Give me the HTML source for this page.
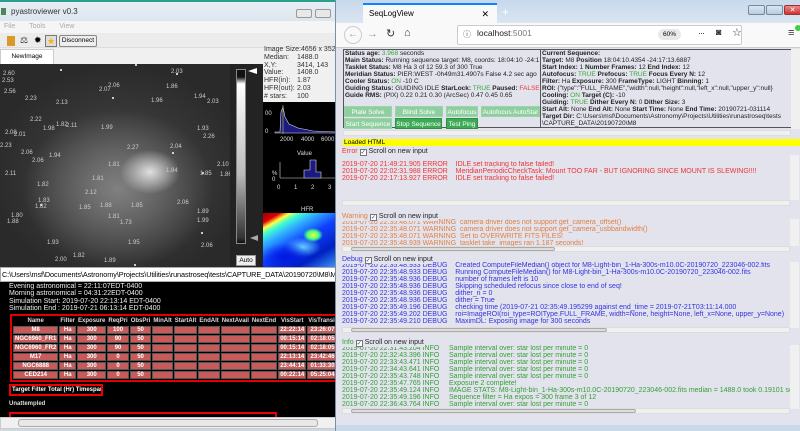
<!DOCTYPE html>
<html><head><meta charset="utf-8">
<style>
*{box-sizing:border-box;margin:0;padding:0}
body{width:800px;height:431px;overflow:hidden;position:relative;font-family:"Liberation Sans",sans-serif;background:#cfdce9}
.a{position:absolute}
.lw{left:0;top:0;width:336px;height:431px;background:#f0f0f0;border-top:2px solid #2aa08a;overflow:hidden}
.t7{font-size:7px;line-height:7px;white-space:nowrap}
.star{position:absolute;color:#ccc;font-size:6px;white-space:nowrap}
.dot{position:absolute;width:2px;height:2px;background:#fff;border-radius:1px}
table.tg{position:absolute;left:10px;top:312px;width:345px;border:2px solid #e00000;border-spacing:1px;background:#000;font-size:6px;font-weight:bold;color:#fff;border-collapse:separate;table-layout:auto}
table.tg td,table.tg th{height:8px;line-height:6px;padding:0 1px;text-align:center;white-space:nowrap;font-size:6px}
table.tg td{background:#c85a5a;border:1px solid #555}
table.tg th{color:#ddd}
.rw{left:335px;top:0;width:465px;height:431px;background:#e3e3ee;border-left:1px solid #7a8ea8}
.lbl{font-weight:bold}
.btn{position:absolute;height:11px;font-size:6.5px;line-height:11px;text-align:center;color:#fff;background:#8fcf9f;border:1px solid #9bd3aa;white-space:nowrap;overflow:hidden}
.btn.d{background:#3daa55;border-color:#2e8f46}
.log{position:absolute;left:342px;width:448px;font-size:7px;line-height:7px;white-space:nowrap;overflow:hidden}
.hs{position:absolute;left:342px;width:448px;height:6px;background:#f0f0f0;border:1px solid #ddd}
.hs i{position:absolute;top:0;height:4px;background:#ddd;border:1px solid #aaa;border-radius:2px}
.cb{display:inline-block;width:7px;height:7px;border:1px solid #777;background:#fff;vertical-align:-1px;font-size:6px;line-height:6px;color:#336;text-align:center;margin:0 2px}
.vs{position:absolute;left:790px;width:9px;background:#f0f0f0}
</style></head><body>

<!-- LEFT WINDOW -->
<div class="a lw">
  <div class="a" style="left:0;top:0;width:336px;height:19px;background:linear-gradient(#e8eef5,#dde6ef)"></div>
  <div class="a" style="left:1px;top:6px;width:5px;height:7px;background:#4a8a5a"></div>
  <div class="a" style="left:11px;top:5px;font-size:8px;color:#333">pyastroviewer v0.3</div>
  <div class="a" style="left:296px;top:7px;width:16px;height:9px;border:1px solid #999;border-radius:2px;background:#e8e8e8"></div>
  <div class="a" style="left:315px;top:7px;width:16px;height:9px;border:1px solid #999;border-radius:2px;background:#e8e8e8"></div>
  <div class="a" style="left:0;top:19px;width:336px;height:12px;background:#f5f5f5"></div>
  <div class="a" style="left:4px;top:21px;font-size:7px;color:#aaa;word-spacing:12px">File Tools View</div>
  <div class="a" style="left:0;top:31px;width:336px;height:15px;background:#ececec;border-bottom:1px solid #ddd"></div>
  <div class="a" style="left:7px;top:34px;width:8px;height:10px;background:#d99a2b"></div>
  <div class="a" style="left:20px;top:33px;font-size:9px;color:#333">⚖</div>
  <div class="a" style="left:34px;top:33px;font-size:9px;color:#000">✹</div>
  <div class="a" style="left:45px;top:33px;width:12px;height:12px;border:1px solid #777;background:#ddd;font-size:9px;color:#f0b800;text-align:center;line-height:11px">★</div>
  <div class="a" style="left:59px;top:33px;width:38px;height:12px;border:1px solid #888;border-radius:2px;background:#eee;font-size:6.5px;line-height:10px;text-align:center">Disconnect</div>
  <div class="a" style="left:0;top:47px;width:54px;height:15px;background:#fff;border:1px solid #ccc;border-bottom:none;font-size:6.5px;line-height:14px;text-align:center">NewImage</div>

  <!-- image -->
  <div class="a" style="left:0;top:62px;width:230px;height:203px;overflow:hidden;background:radial-gradient(ellipse 30px 22px at 150px 108px,#e0e0e0,rgba(200,200,200,0) 100%),radial-gradient(ellipse 95px 80px at 118px 125px,#808080,rgba(100,100,100,0) 100%),radial-gradient(ellipse 130px 110px at 120px 110px,#484848,#2a2a2a 100%)">
    <div class="dot" style="left:60px;top:5px"></div><div class="dot" style="left:135px;top:0px"></div><div class="dot" style="left:176px;top:9px"></div><div class="dot" style="left:112px;top:33px"></div><div class="dot" style="left:172px;top:88px"></div><div class="dot" style="left:40px;top:140px"></div><div class="dot" style="left:202px;top:108px"></div><div class="dot" style="left:134px;top:200px"></div><div class="dot" style="left:201px;top:168px"></div>
    <span class="star" style="left:3px;top:7px">2.60</span><span class="star" style="left:2px;top:14px">2.53</span><span class="star" style="left:4px;top:25px">2.56</span><span class="star" style="left:25px;top:32px">2.23</span><span class="star" style="left:56px;top:36px">2.13</span><span class="star" style="left:99px;top:23px">2.07</span><span class="star" style="left:108px;top:19px">2.06</span><span class="star" style="left:171px;top:5px">2.03</span><span class="star" style="left:166px;top:20px">1.86</span><span class="star" style="left:151px;top:34px">1.96</span><span class="star" style="left:194px;top:30px">1.94</span><span class="star" style="left:207px;top:35px">2.03</span>
    <span class="star" style="left:30px;top:53px">2.22</span><span class="star" style="left:43px;top:62px">1.98</span><span class="star" style="left:56px;top:58px">1.82</span><span class="star" style="left:66px;top:59px">2.11</span><span class="star" style="left:5px;top:66px">2.08</span><span class="star" style="left:14px;top:68px">2.01</span><span class="star" style="left:0px;top:79px">2.23</span><span class="star" style="left:101px;top:61px">1.99</span><span class="star" style="left:197px;top:62px">1.93</span><span class="star" style="left:203px;top:70px">2.26</span>
    <span class="star" style="left:21px;top:86px">2.06</span><span class="star" style="left:32px;top:94px">2.06</span><span class="star" style="left:49px;top:89px">1.94</span><span class="star" style="left:127px;top:81px">2.27</span><span class="star" style="left:170px;top:80px">2.04</span><span class="star" style="left:108px;top:98px">1.81</span><span class="star" style="left:166px;top:104px">1.84</span><span class="star" style="left:5px;top:107px">2.11</span><span class="star" style="left:217px;top:98px">2.10</span><span class="star" style="left:200px;top:107px">1.85</span><span class="star" style="left:220px;top:108px">1.86</span>
    <span class="star" style="left:37px;top:118px">1.82</span><span class="star" style="left:85px;top:126px">2.12</span><span class="star" style="left:92px;top:112px">1.81</span><span class="star" style="left:38px;top:134px">1.83</span><span class="star" style="left:35px;top:140px">1.82</span><span class="star" style="left:79px;top:141px">1.85</span><span class="star" style="left:100px;top:139px">1.88</span><span class="star" style="left:131px;top:139px">1.85</span><span class="star" style="left:177px;top:136px">2.06</span><span class="star" style="left:108px;top:150px">1.81</span><span class="star" style="left:120px;top:156px">1.73</span><span class="star" style="left:197px;top:145px">1.89</span><span class="star" style="left:197px;top:154px">1.99</span><span class="star" style="left:11px;top:149px">1.80</span><span class="star" style="left:7px;top:155px">1.88</span>
    <span class="star" style="left:47px;top:176px">1.93</span><span class="star" style="left:128px;top:176px">1.95</span><span class="star" style="left:201px;top:179px">2.06</span><span class="star" style="left:73px;top:189px">1.82</span><span class="star" style="left:55px;top:193px">2.00</span><span class="star" style="left:104px;top:194px">1.89</span>
  </div>
  <!-- slider panel -->
  <div class="a" style="left:230px;top:62px;width:33px;height:203px;background:#232323"></div>
  <div class="a" style="left:236px;top:67px;width:10px;height:175px;border:1px solid #888;background:linear-gradient(#111 0 4%,#fff 8%,#bbb 60%,#333 97%,#111)"></div>
  <div class="a" style="left:248px;top:66px;width:0;height:0;border-top:3px solid transparent;border-bottom:3px solid transparent;border-right:9px solid #fff"></div>
  <div class="a" style="left:250px;top:233px;width:0;height:0;border-top:3px solid transparent;border-bottom:3px solid transparent;border-right:8px solid #aaa"></div>
  <div class="a" style="left:236px;top:253px;width:20px;height:11px;background:#eee;border:1px solid #999;font-size:6.5px;line-height:9px;text-align:center">Auto</div>
  <!-- info panel -->
  <div class="a t7" style="left:264px;top:44px;color:#333;line-height:7.8px">Image Size:4656 x 3520<br>Median:<br>X,Y:<br>Value:<br>HFR(in):<br>HFR(out):<br># stars:</div>
  <div class="a t7" style="left:297px;top:44px;color:#333;line-height:7.8px"><br>1488.0<br>3414, 143<br>1408.0<br>1.87<br>2.03<br>100</div>
  <div class="a" style="left:263px;top:100px;width:73px;height:111px;background:#000"></div>
  <svg class="a" style="left:263px;top:100px" width="73" height="111">
    <path d="M12 30 L17 30 L18 10 L20 5 L22 15 L26 22 L35 26 L50 29 L73 30 L73 31 L12 31Z" fill="#1a1a80" stroke="#ddd" stroke-width="0.6"/>
    <line x1="20" y1="3" x2="20" y2="32" stroke="#cc4" stroke-width="0.6"/>
    <text x="2" y="13" font-size="6" fill="#ddd">00</text><text x="2" y="31" font-size="6" fill="#ddd">0</text>
    <text x="17" y="39" font-size="6" fill="#ddd">2000</text><text x="38" y="39" font-size="6" fill="#ddd">4000</text><text x="58" y="39" font-size="6" fill="#ddd">6000</text>
    <text x="34" y="53" font-size="6" fill="#ddd">Value</text>
    <path d="M17 76 L17 60 M17 76 L73 76" stroke="#ddd" stroke-width="0.6" fill="none"/>
    <path d="M41 76 L41 68 L47 68 L47 58 L53 58 L53 70 L58 70 L58 76Z" fill="#1a1a80" stroke="#ddd" stroke-width="0.6"/>
    <text x="9" y="73" font-size="6" fill="#ddd">%</text><text x="9" y="79" font-size="6" fill="#ddd">0</text>
    <text x="14" y="87" font-size="6" fill="#ddd">0</text><text x="31" y="87" font-size="6" fill="#ddd">1</text><text x="48" y="87" font-size="6" fill="#ddd">2</text><text x="65" y="87" font-size="6" fill="#ddd">3</text>
    <text x="38" y="109" font-size="6" fill="#ddd">HFR</text>
  </svg>
  <div class="a" style="left:263px;top:211px;width:73px;height:56px;overflow:hidden;background:radial-gradient(ellipse 25px 14px at 22px 44px,#0018e0,rgba(0,0,255,0)),radial-gradient(ellipse 10px 7px at 50px 22px,#ffff40,#40ff80 60%,rgba(0,255,255,0)),radial-gradient(ellipse 18px 10px at 40px 34px,#60d0ff,rgba(0,255,255,0)),linear-gradient(150deg,#900 0,#d00 10%,#ff4 16%,#40ffd0 22%,#30b0ff 32%,#1040ff 50%,#0020c0 75%,#40a0ff 100%)"></div>
  <!-- path bar -->
  <div class="a" style="left:0;top:265px;width:336px;height:15px;background:#fff;border:1px solid #aaa;font-size:7.3px;line-height:13px;white-space:nowrap;overflow:hidden;padding-left:1px;letter-spacing:-0.1px">C:\Users\msf\Documents\Astronomy\Projects\Utilities\runastroseq\tests\CAPTURE_DATA\20190720\M8\M</div>
  <!-- black area -->
  <div class="a" style="left:0;top:280px;width:336px;height:135px;background:#000"></div>
  <div class="a t7" style="left:9px;top:281px;color:#eee;line-height:7.3px">Evening astronomical = 22:11:07EDT-0400<br>Morning astronomical = 04:31:22EDT-0400<br>Simulation Start: 2019-07-20 22:13:14 EDT-0400<br>Simulation End : 2019-07-21 06:13:14 EDT-0400</div>
  <table class="tg">
    <tr><th style="width:42px">Name</th><th>Filter</th><th>Exposure</th><th>ReqPri</th><th>ObsPri</th><th>MinAlt</th><th>StartAlt</th><th>EndAlt</th><th>NextAvail</th><th>NextEnd</th><th>VisStart</th><th>VisTransit</th><th>Vis</th></tr>
    <tr><td>M8</td><td>Ha</td><td>300</td><td>100</td><td>50</td><td></td><td></td><td></td><td></td><td></td><td>22:22:14</td><td>23:26:07</td><td>00:2</td></tr>
    <tr><td>NGC6960_FR1</td><td>Ha</td><td>300</td><td>90</td><td>50</td><td></td><td></td><td></td><td></td><td></td><td>00:15:14</td><td>02:18:05</td><td>06:1</td></tr>
    <tr><td>NGC6960_FR2</td><td>Ha</td><td>300</td><td>90</td><td>50</td><td></td><td></td><td></td><td></td><td></td><td>00:15:14</td><td>02:18:05</td><td>06:1</td></tr>
    <tr><td>M17</td><td>Ha</td><td>300</td><td>0</td><td>50</td><td></td><td></td><td></td><td></td><td></td><td>22:13:14</td><td>23:42:46</td><td>02:1</td></tr>
    <tr><td>NGC6888</td><td>Ha</td><td>300</td><td>0</td><td>50</td><td></td><td></td><td></td><td></td><td></td><td>23:44:14</td><td>01:33:30</td><td>05:3</td></tr>
    <tr><td>CED214</td><td>Ha</td><td>300</td><td>0</td><td>50</td><td></td><td></td><td></td><td></td><td></td><td>00:22:14</td><td>05:25:04</td><td>06:1</td></tr>
  </table>
  <div class="a" style="left:9px;top:382px;width:94px;height:12px;border:2px solid #e00;font-size:6px;font-weight:bold;color:#fff;line-height:8px;padding-left:1px;white-space:nowrap;overflow:hidden">Target Filter Total (Hr) Timespan</div>
  <div class="a" style="left:9px;top:399px;font-size:6px;font-weight:bold;color:#ddd">Unattempled</div>
  <div class="a" style="left:9px;top:410px;width:268px;height:8px;border:2px solid #e00;border-bottom:none"></div>
  <div class="a" style="left:0;top:415px;width:336px;height:12px;background:#f0f0f0;border:1px solid #ccc"></div>
  <div class="a" style="left:18px;top:417px;width:300px;height:8px;background:#e8e8e8;border:1px solid #aaa;border-radius:3px"></div>
  <div class="a" style="left:0;top:427px;width:336px;height:4px;background:#d0d8e0"></div>
</div>

<!-- RIGHT WINDOW -->
<div class="a rw">
  <div class="a" style="left:0;top:0;width:465px;height:23px;background:linear-gradient(#c7d9ec,#dae5f1)"></div>
  <div class="a" style="left:27px;top:3px;width:134px;height:20px;background:#f9f9fa;border-top:2px solid #0a84ff;font-size:8px;line-height:18px;padding-left:6px">SeqLogView<span style="position:absolute;right:8px;font-size:9px">✕</span></div>
  <div class="a" style="left:166px;top:5px;font-size:12px;color:#fff">+</div>
  <div class="a" style="left:412px;top:5px;width:17px;height:10px;border:1px solid #789;border-radius:2px;background:linear-gradient(#dbe6f2,#b8cce2)"></div>
  <div class="a" style="left:430px;top:5px;width:17px;height:10px;border:1px solid #789;border-radius:2px;background:linear-gradient(#dbe6f2,#b8cce2)"></div>
  <div class="a" style="left:448px;top:5px;width:17px;height:10px;border:1px solid #933;border-radius:2px;background:linear-gradient(#e88,#c33);color:#fff;font-size:7px;text-align:center;line-height:9px">✕</div>
  <div class="a" style="left:0;top:23px;width:465px;height:25px;background:#f9f9fa;border-bottom:1px solid #ccc"></div>
  <div class="a" style="left:8px;top:26px;width:18px;height:18px;border:1px solid #ccc;border-radius:50%;font-size:10px;color:#999;text-align:center;line-height:16px">←</div>
  <div class="a" style="left:31px;top:28px;font-size:11px;color:#999">→</div>
  <div class="a" style="left:50px;top:27px;font-size:11px;color:#333">↻</div>
  <div class="a" style="left:68px;top:27px;font-size:11px;color:#333">⌂</div>
  <div class="a" style="left:121px;top:25px;width:285px;height:20px;background:#fff;border:1px solid #ccc;border-radius:2px"></div>
  <div class="a" style="left:127px;top:29px;font-size:8px;color:#555">ⓘ</div>
  <div class="a" style="left:141px;top:28px;font-size:8.5px;color:#222">localhost<span style="color:#777">:5001</span></div>
  <div class="a" style="left:322px;top:29px;width:23px;height:11px;border-radius:6px;background:#e8e8e8;font-size:6.5px;line-height:11px;text-align:center">60%</div>
  <div class="a" style="left:362px;top:28px;font-size:9px;color:#333;letter-spacing:-1px">···</div>
  <div class="a" style="left:380px;top:27px;font-size:9px;color:#333">◙</div>
  <div class="a" style="left:396px;top:26px;font-size:11px;color:#333">☆</div>
  <div class="a" style="left:452px;top:27px;font-size:11px;color:#333">≡</div>
  <div class="a" style="left:459px;top:25px;width:6px;height:6px;border-radius:50%;background:#4c4"></div>

  <!-- status boxes -->
  <div class="a" style="left:7px;top:49px;width:197px;height:79px;border:1px solid #555;border-right:none"></div>
  <div class="a" style="left:204px;top:49px;width:252px;height:79px;border:1px solid #555"></div>
  <div class="a t7" style="left:9px;top:50px;color:#222;font-size:6.5px;line-height:7px;width:194px;overflow:hidden"><span class="lbl">Status age:</span> <span style="color:#3a3">3.968</span> seconds<br><span class="lbl">Main Status:</span> Running sequence target: M8, coords: 18:04:10 -24:17:14<br><span class="lbl">Tasklet Status:</span> M8 Ha 3 of 12 59.3 of 300 True<br><span class="lbl">Meridian Status:</span> PIER:WEST -0h49m31.4907s False 4.2 sec ago<br><span class="lbl">Cooler Status:</span> <span style="color:#3a3">ON</span> -10 C<br><span class="lbl">Guiding Status:</span> GUIDING IDLE <span class="lbl">StarLock:</span> <span style="color:#3a3">TRUE</span> <span class="lbl">Paused:</span> <span style="color:#e33">FALSE</span><br><span class="lbl">Guide RMS:</span> (PIX) 0.22 0.21 0.30 (ArcSec) 0.47 0.45 0.65</div>
  <div class="a t7" style="left:206px;top:50px;color:#222;font-size:6.5px;line-height:7px"><span class="lbl">Current Sequence:</span><br><span class="lbl">Target:</span> M8 <span class="lbl">Position</span> 18:04:10.4354 -24:17:13.6887<br><span class="lbl">Start Index:</span> 1 <span class="lbl">Number Frames:</span> 12 <span class="lbl">End Index:</span> 12<br><span class="lbl">Autofocus:</span> <span style="color:#3a3">TRUE</span> <span class="lbl">Prefocus:</span> <span style="color:#3a3">TRUE</span> <span class="lbl">Focus Every N:</span> 12<br><span class="lbl">Filter:</span> Ha <span class="lbl">Exposure:</span> 300 <span class="lbl">FrameType:</span> LIGHT <span class="lbl">Binning:</span> 1<br><span class="lbl">ROI:</span> {"type":"FULL_FRAME","width":null,"height":null,"left_x":null,"upper_y":null}<br><span class="lbl">Cooling:</span> <span style="color:#3a3">ON</span> <span class="lbl">Target (C):</span> -10<br><span class="lbl">Guiding:</span> <span style="color:#3a3">TRUE</span> <span class="lbl">Dither Every N:</span> 0 <span class="lbl">Dither Size:</span> 3<br><span class="lbl">Start Alt:</span> None <span class="lbl">End Alt:</span> None <span class="lbl">Start Time:</span> None <span class="lbl">End Time:</span> 20190721-031114<br><span class="lbl">Target Dir:</span> C:\Users\msf\Documents\Astronomy\Projects\Utilities\runastroseq\tests<br>\CAPTURE_DATA\20190720\M8</div>
  <div class="btn" style="left:8px;top:106px;width:48px">Plate Solve</div>
  <div class="btn" style="left:59px;top:106px;width:48px">Blind Solve</div>
  <div class="btn" style="left:110px;top:106px;width:32px">Autofocus</div>
  <div class="btn" style="left:145px;top:106px;width:59px">Autofocus AutoStar</div>
  <div class="btn" style="left:8px;top:118px;width:48px">Start Sequence</div>
  <div class="btn d" style="left:59px;top:118px;width:47px">Stop Sequence</div>
  <div class="btn d" style="left:110px;top:118px;width:32px">Test Ping</div>
  <div class="vs" style="left:455px;top:49px;height:80px"></div>
  <div class="hs" style="left:7px;top:130px;width:448px"></div>
  <div class="a" style="left:7px;top:139px;width:458px;height:7px;background:#ffff00;font-size:6.5px;line-height:7px;padding-left:1px">Loaded HTML</div>
</div>

<!-- logs (page coords) -->
<div class="a t7" style="left:342px;top:148px;color:#e33">Error<span class="cb">✓</span><span style="color:#222">Scroll on new input</span></div>
<div class="log" style="top:161px;height:40px;color:#ee3333">2019-07-20 21:49:21.905 ERROR&nbsp;&nbsp;&nbsp; IDLE set tracking to false failed!<br>2019-07-20 22:02:31.988 ERROR&nbsp;&nbsp;&nbsp; MeridianPeriodicCheckTask: Mount TOO FAR - BUT IGNORING SINCE MOUNT IS SLEWING!!!!<br>2019-07-20 22:17:13.927 ERROR&nbsp;&nbsp;&nbsp; IDLE set tracking to false failed!</div>
<div class="vs" style="top:155px;height:45px"></div>
<div class="hs" style="top:200px"></div>

<div class="log" style="top:219px;height:28px;color:#e08040">2019-07-20 22:35:48.071 WARNING&nbsp; camera driver does not support get_camera_offset()<br>2019-07-20 22:35:48.071 WARNING&nbsp; camera driver does not support get_camera_usbbandwidth()<br>2019-07-20 22:35:48.071 WARNING&nbsp; Set to OVERWRITE FITS FILES!<br>2019-07-20 22:35:48.939 WARNING&nbsp; tasklet take_images ran 1.187 seconds!</div>
<div class="a t7" style="left:342px;top:213px;color:#e08040;background:#e3e3ee">Warning<span class="cb">✓</span><span style="color:#222">Scroll on new input</span></div>
<div class="vs" style="top:219px;height:27px"></div>
<div class="hs" style="top:246px"><i style="left:8px;width:204px"></i></div>

<div class="log" style="top:262px;height:66px;color:#3333dd">2019-07-20 22:35:48.933 DEBUG&nbsp;&nbsp;&nbsp; Created ComputeFileMedian() object for M8-Light-bin_1-Ha-300s-m10.0C-20190720_223046-002.fits<br>2019-07-20 22:35:48.933 DEBUG&nbsp;&nbsp;&nbsp; Running ComputeFileMedian() for M8-Light-bin_1-Ha-300s-m10.0C-20190720_223046-002.fits<br>2019-07-20 22:35:48.936 DEBUG&nbsp;&nbsp;&nbsp; number of frames left is 10<br>2019-07-20 22:35:48.936 DEBUG&nbsp;&nbsp;&nbsp; Skipping scheduled refocus since close to end of seq!<br>2019-07-20 22:35:48.936 DEBUG&nbsp;&nbsp;&nbsp; dither_n = 0<br>2019-07-20 22:35:48.936 DEBUG&nbsp;&nbsp;&nbsp; dither = True<br>2019-07-20 22:35:49.196 DEBUG&nbsp;&nbsp;&nbsp; checking time (2019-07-21 02:35:49.195299 against end_time = 2019-07-21T03:11:14.000<br>2019-07-20 22:35:49.202 DEBUG&nbsp;&nbsp;&nbsp; roi=ImageROI(roi_type=ROIType.FULL_FRAME, width=None, height=None, left_x=None, upper_y=None)<br>2019-07-20 22:35:49.210 DEBUG&nbsp;&nbsp;&nbsp; MaximDL: Exposing image for 300 seconds</div>
<div class="a t7" style="left:342px;top:256px;color:#3333dd;background:#e3e3ee">Debug<span class="cb">✓</span><span style="color:#222">Scroll on new input</span></div>
<div class="vs" style="top:262px;height:66px"></div>
<div class="hs" style="top:327px"><i style="left:8px;width:256px"></i></div>

<div class="log" style="top:345px;height:64px;color:#33a033">2019-07-20 22:31:43.204 INFO&nbsp;&nbsp;&nbsp;&nbsp; Sample interval over: star lost per minute = 0<br>2019-07-20 22:32:43.396 INFO&nbsp;&nbsp;&nbsp;&nbsp; Sample interval over: star lost per minute = 0<br>2019-07-20 22:33:43.471 INFO&nbsp;&nbsp;&nbsp;&nbsp; Sample interval over: star lost per minute = 0<br>2019-07-20 22:34:43.641 INFO&nbsp;&nbsp;&nbsp;&nbsp; Sample interval over: star lost per minute = 0<br>2019-07-20 22:35:43.748 INFO&nbsp;&nbsp;&nbsp;&nbsp; Sample interval over: star lost per minute = 0<br>2019-07-20 22:35:47.765 INFO&nbsp;&nbsp;&nbsp;&nbsp; Exposure 2 complete!<br>2019-07-20 22:35:49.124 INFO&nbsp;&nbsp;&nbsp;&nbsp; IMAGE STATS: M8-Light-bin_1-Ha-300s-m10.0C-20190720_223046-002.fits median = 1488.0 took 0.19101 seconds<br>2019-07-20 22:35:49.196 INFO&nbsp;&nbsp;&nbsp;&nbsp; Sequence filter = Ha expos = 300 frame 3 of 12<br>2019-07-20 22:36:43.764 INFO&nbsp;&nbsp;&nbsp;&nbsp; Sample interval over: star lost per minute = 0</div>
<div class="a t7" style="left:342px;top:339px;color:#33a033;background:#e3e3ee">Info<span class="cb">✓</span><span style="color:#222">Scroll on new input</span></div>
<div class="vs" style="top:345px;height:64px"></div>
<div class="hs" style="top:408px"><i style="left:8px;width:285px"></i></div>
<div class="a" style="left:336px;top:425px;width:464px;height:6px;background:#c9d9ea"></div>
</body></html>
